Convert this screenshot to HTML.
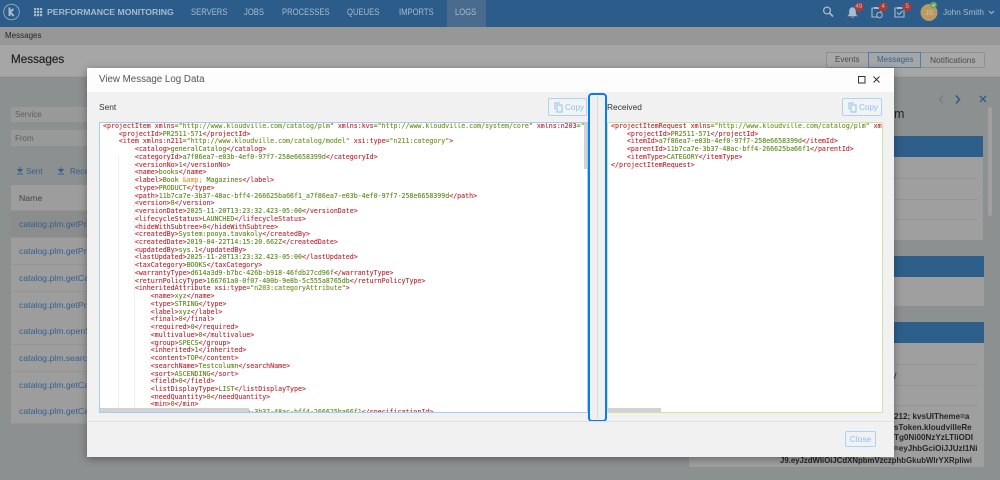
<!DOCTYPE html>
<html><head><meta charset="utf-8"><style>
html,body{margin:0;padding:0;width:1000px;height:480px;overflow:hidden;background:#8d9090;font-family:"Liberation Sans",sans-serif}
#w{position:absolute;left:0;top:0;width:1000px;height:480px;overflow:hidden;filter:blur(.35px)}
.a{position:absolute}
.t{position:absolute;white-space:nowrap}
.n{font-size:9px;color:#a9bbcc;top:6px;line-height:13px;transform:scaleX(.85);transform-origin:0 50%}
.row{position:absolute;left:11px;width:90px;height:27px;background:#9d9d9d;border-bottom:1px solid #959595;box-sizing:border-box}
.row span{position:absolute;left:8px;top:8px;font-size:8.7px;color:#34608f;white-space:nowrap}
.code{position:absolute;font-family:"DejaVu Sans Mono","Liberation Mono",monospace;font-size:6.62px;line-height:7.74px;white-space:pre;color:#5f8a20;-webkit-text-stroke:.12px currentColor}
.code b{font-weight:normal;color:#bd2a33}
.code i{font-style:normal;color:#6f9225}
.code u{text-decoration:none;color:#f0932b}
.copy{position:absolute;top:98px;height:18px;width:39px;box-sizing:border-box;border:1px solid #a9d3f7;border-radius:2px;color:#8cc3f4;font-size:8.2px;line-height:16px;background:#f3f3f3}
.card{position:absolute;background:#9f9f9f;left:689px;width:295px}
.hd{position:absolute;background:#2e5e8a;left:689px;width:295px;height:21px}
.sep{position:absolute;left:700px;width:277px;height:1px;background:#959595}
.k{position:absolute;white-space:nowrap;font-size:8.1px;line-height:12px;color:#262626;font-weight:bold}
</style></head><body><div id="w">

<!-- top bar -->
<div class="a" style="left:0;top:0;width:1000px;height:27px;background:#2c5c8a"></div>
<div class="a" style="left:447px;top:0;width:39px;height:27px;background:#496c8e"></div>
<svg class="a" style="left:0;top:0" width="50" height="27">
<circle cx="11.5" cy="12" r="7.8" fill="none" stroke="#8aa6bf" stroke-width="1"/>
<path d="M9.5 7.5V16M13.5 9l-3.4 3 3.6 4" fill="none" stroke="#a9bbcc" stroke-width="2"/>
<g fill="#a9bbcc"><rect x="34" y="8" width="2.2" height="2.2"/><rect x="37" y="8" width="2.2" height="2.2"/><rect x="40" y="8" width="2.2" height="2.2"/><rect x="34" y="11" width="2.2" height="2.2"/><rect x="37" y="11" width="2.2" height="2.2"/><rect x="40" y="11" width="2.2" height="2.2"/><rect x="34" y="14" width="2.2" height="2.2"/><rect x="37" y="14" width="2.2" height="2.2"/><rect x="40" y="14" width="2.2" height="2.2"/></g>
</svg>
<span class="t" style="left:47px;top:6px;line-height:13px;font-weight:bold;font-size:8.7px;color:#a9bbcc">PERFORMANCE MONITORING</span>
<span class="t n" style="left:191px">SERVERS</span>
<span class="t n" style="left:244px">JOBS</span>
<span class="t n" style="left:282px">PROCESSES</span>
<span class="t n" style="left:347px">QUEUES</span>
<span class="t n" style="left:399px">IMPORTS</span>
<span class="t n" style="left:455px">LOGS</span>
<svg class="a" style="left:815px;top:0" width="185" height="27">
<circle cx="12" cy="10.5" r="3.4" fill="none" stroke="#a9bbcc" stroke-width="1.3"/><path d="M14.5 13l3.5 3.5" stroke="#a9bbcc" stroke-width="1.6"/>
<path d="M33 16c1.5-1.2 1.5-2.5 1.5-5 0-2 1.500-3.500 3-3.500s3 1.500 3 3.500c0 2.500 0 3.800 1.500 5zM36 17.200h3" fill="#a9bbcc" stroke="#a9bbcc" stroke-width=".6"/>
<circle cx="44" cy="7" r="4.500" fill="#a83a3a"/>
<path d="M57 8h9v9h-9z" fill="none" stroke="#a9bbcc" stroke-width="1.100"/><path d="M59 7h5v2h-5z" fill="#a9bbcc"/><circle cx="64.500" cy="15" r="2.800" fill="#2c5c8a" stroke="#a9bbcc"/>
<circle cx="68" cy="7" r="4.500" fill="#a83a3a"/>
<path d="M80 8h9v9h-9z" fill="none" stroke="#a9bbcc" stroke-width="1.100"/><path d="M82 7h5v2h-5z" fill="#a9bbcc"/><path d="M82 12.500l2 2 3.500-3.500" fill="none" stroke="#a9bbcc" stroke-width="1.100"/>
<circle cx="92" cy="7" r="4.500" fill="#a83a3a"/>
<circle cx="114" cy="12.500" r="8.500" fill="#b89a62"/>
<circle cx="118.500" cy="5" r="3.300" fill="#6fa35a"/><path d="M117 5l1.200 1.200 2-2.200" stroke="#dfe8d8" stroke-width=".8" fill="none"/>
<path d="M174 11l2.500 2.500 2.500-2.500" fill="none" stroke="#a9bbcc" stroke-width="1"/>
</svg>
<span class="t" style="left:855.500px;top:4px;font-size:6px;color:#d9b7b7">49</span>
<span class="t" style="left:881.500px;top:4px;font-size:6px;color:#d9b7b7">4</span>
<span class="t" style="left:905.500px;top:4px;font-size:6px;color:#d9b7b7">5</span>
<span class="t" style="left:925px;top:8px;font-size:7.500px;color:#d5c39c">JS</span>
<span class="t" style="left:943px;top:6px;font-size:8.200px;line-height:13px;color:#a9bbcc">John Smith</span>

<!-- breadcrumb / header -->
<div class="a" style="left:0;top:27px;width:1000px;height:18px;background:#979797"></div>
<span class="t" style="left:5px;top:30px;font-size:8px;line-height:11px;color:#272727">Messages</span>
<div class="a" style="left:0;top:45px;width:1000px;height:31px;background:#a6a6a6;border-bottom:1px solid #9c9c9c"></div>
<span class="t" style="left:11px;top:51px;font-size:11.700px;line-height:17px;color:#232323;-webkit-text-stroke:.2px #232323">Messages</span>

<!-- tabs -->
<div class="a" style="left:826px;top:52px;width:159px;height:16px;background:#a8a8a8;border:1px solid #8f8f8f;box-sizing:border-box;border-radius:2px"></div>
<div class="a" style="left:868px;top:52px;width:53px;height:16px;background:#a6a6a6;border:1px solid #4f7ea8;box-sizing:border-box"></div>
<span class="t" style="left:835px;top:54px;font-size:8px;line-height:12px;color:#4a4a4a">Events</span>
<span class="t" style="left:877px;top:54px;font-size:8px;line-height:12px;color:#34608f">Messages</span>
<span class="t" style="left:930px;top:54px;font-size:8.400px;line-height:12px;color:#4a4a4a">Notifications</span>

<!-- left -->
<div class="a" style="left:11px;top:107px;width:90px;height:15px;background:#989a9a"></div>
<div class="a" style="left:11px;top:130px;width:90px;height:16px;background:#989a9a"></div>
<span class="t" style="left:15px;top:109px;font-size:8px;line-height:11px;color:#5c5c5c">Service</span>
<span class="t" style="left:15px;top:133px;font-size:8px;line-height:11px;color:#5c5c5c">From</span>
<svg class="a" style="left:16px;top:166px" width="60" height="12"><path d="M4 1v4M1.800 3.500L4 6l2.200-2.500zM1 8h6" stroke="#34608f" fill="#34608f" stroke-width="1"/><path d="M45 1v4M42.800 3.500L45 6l2.200-2.500zM42 8h6" stroke="#34608f" fill="#34608f" stroke-width="1"/></svg>
<span class="t" style="left:26px;top:166px;font-size:8px;line-height:12px;color:#34608f">Sent</span>
<span class="t" style="left:70px;top:166px;font-size:8px;line-height:12px;color:#34608f">Rece</span>
<div class="row" style="top:185px;height:26px"><span style="color:#444;top:8px">Name</span></div>
<div class="row" style="top:211px;background:#8b8c8c"><span>catalog.plm.getPro</span></div>
<div class="row" style="top:238px"><span>catalog.plm.getPro</span></div>
<div class="row" style="top:265px"><span>catalog.plm.getCat</span></div>
<div class="row" style="top:292px"><span>catalog.plm.getPro</span></div>
<div class="row" style="top:318px"><span>catalog.plm.openS</span></div>
<div class="row" style="top:345px"><span>catalog.plm.search</span></div>
<div class="row" style="top:372px"><span>catalog.plm.getCat</span></div>
<div class="row" style="top:398px;height:26px"><span>catalog.plm.getCat</span></div>

<!-- right panel -->
<div class="card" style="top:136px;height:104px;width:294px"></div>
<div class="hd" style="top:136px;width:294px"></div>
<div class="sep" style="top:178px"></div><div class="sep" style="top:199px"></div><div class="sep" style="top:219px"></div>
<div class="card" style="top:256px;height:50px"></div><div class="hd" style="top:256px"></div>
<div class="card" style="top:322px;height:145px"></div><div class="hd" style="top:322px"></div>
<div class="sep" style="top:364px"></div><div class="sep" style="top:385px"></div><div class="sep" style="top:405px"></div>
<span class="t" style="left:894px;top:107px;font-size:12.500px;line-height:15px;color:#222">m</span>
<span class="t" style="left:894px;top:370px;font-size:9px;line-height:12px;color:#222">/</span>
<span class="k" style="left:894px;top:411px">212; kvsUITheme=a</span>
<span class="k" style="left:894px;top:422px">sToken.kloudvilleRe</span>
<span class="k" style="left:894px;top:432px">Tg0Ni00NzYzLTliODI</span>
<span class="k" style="left:894px;top:443px">=eyJhbGciOiJJUzI1Ni</span>
<span class="k" style="left:780px;top:455px;font-size:7.800px">J9.eyJzdWIiOiJCdXNpbmVzczphbGkubWlrYXRpIiwi</span>
<svg class="a" style="left:935px;top:92px" width="60" height="130">
<path d="M8 3.500L4.500 7.500 8 11" fill="none" stroke="#6f7d88" stroke-width="1.300"/>
<path d="M21 3.500l3.500 4-3.500 4" fill="none" stroke="#2c5c8a" stroke-width="1.500"/>
<path d="M45 4l6 6M51 4l-6 6" stroke="#2c5c8a" stroke-width="1.300"/>
<rect x="53" y="15" width="4" height="109" rx="2" fill="#a0a0a0"/>
</svg>

<!-- modal -->
<div class="a" style="left:87px;top:68px;width:807px;height:389px;background:#f1f1f1;box-shadow:0 2px 8px rgba(0,0,0,.35)"></div>
<div class="a" style="left:87px;top:68px;width:807px;height:24px;background:#fdfdfd"></div>
<span class="t" style="left:99px;top:73px;font-size:9.750px;line-height:14px;color:#555">View Message Log Data</span>
<svg class="a" style="left:855px;top:72px" width="30" height="15">
<rect x="3.500" y="4.500" width="6.500" height="6.500" fill="none" stroke="#333" stroke-width="1"/>
<path d="M18.500 4.500l6 6M24.500 4.500l-6 6" stroke="#333" stroke-width="1"/>
</svg>
<span class="t" style="left:99px;top:101px;font-size:8.400px;line-height:12px;color:#333">Sent</span>
<span class="t" style="left:607px;top:101px;font-size:8.400px;line-height:12px;color:#333">Received</span>

<div class="copy" style="left:548px"><svg class="a" style="left:5px;top:3px" width="10" height="11"><path d="M1 7.500V1h5M3 3h5v7H3z" fill="none" stroke="#8cc3f4" stroke-width="1"/></svg><span class="t" style="left:16px;top:1px">Copy</span></div>
<div class="copy" style="left:842px;width:40px"><svg class="a" style="left:5px;top:3px" width="10" height="11"><path d="M1 7.500V1h5M3 3h5v7H3z" fill="none" stroke="#8cc3f4" stroke-width="1"/></svg><span class="t" style="left:16px;top:1px">Copy</span></div>

<!-- left editor -->
<div class="a" style="left:99px;top:122px;width:489px;height:291px;background:#fff;border:1px solid #a4cdf2;box-sizing:border-box;overflow:hidden">
<div class="a" style="left:18px;top:33px;width:1px;height:260px;background:#efefef"></div>
<div class="a" style="left:34px;top:33px;width:1px;height:260px;background:#efefef"></div>
<div class="a" style="left:50px;top:156px;width:1px;height:130px;background:#efefef"></div>
<div class="code" style="left:3px;top:0px"><b>&lt;projectItem xmlns</b>=<i>"http://www.kloudville.com/catalog/plm"</i> <b>xmlns:kvs</b>=<i>"http://www.kloudville.com/system/core"</i> <b>xmlns:n203</b>=<i>"</i>
    <b>&lt;projectId&gt;</b>PR2511-571<b>&lt;/projectId&gt;</b>
    <b>&lt;item xmlns:n211</b>=<i>"http://www.kloudville.com/catalog/model"</i> <b>xsi:type</b>=<i>"n211:category"</i><b>&gt;</b>
        <b>&lt;catalog&gt;</b>generalCatalog<b>&lt;/catalog&gt;</b>
        <b>&lt;categoryId&gt;</b>a7f86ea7-e03b-4ef0-97f7-258e6658399d<b>&lt;/categoryId&gt;</b>
        <b>&lt;versionNo&gt;</b>1<b>&lt;/versionNo&gt;</b>
        <b>&lt;name&gt;</b>books<b>&lt;/name&gt;</b>
        <b>&lt;label&gt;</b>Book <u>&amp;amp;</u> Magazines<b>&lt;/label&gt;</b>
        <b>&lt;type&gt;</b>PRODUCT<b>&lt;/type&gt;</b>
        <b>&lt;path&gt;</b>11b7ca7e-3b37-48ac-bff4-266625ba66f1_a7f86ea7-e03b-4ef0-97f7-258e6658399d<b>&lt;/path&gt;</b>
        <b>&lt;version&gt;</b>8<b>&lt;/version&gt;</b>
        <b>&lt;versionDate&gt;</b>2025-11-20T13:23:32.423-05:00<b>&lt;/versionDate&gt;</b>
        <b>&lt;lifecycleStatus&gt;</b>LAUNCHED<b>&lt;/lifecycleStatus&gt;</b>
        <b>&lt;hideWithSubtree&gt;</b>0<b>&lt;/hideWithSubtree&gt;</b>
        <b>&lt;createdBy&gt;</b>System:pooya.tavakoly<b>&lt;/createdBy&gt;</b>
        <b>&lt;createdDate&gt;</b>2019-04-22T14:15:20.662Z<b>&lt;/createdDate&gt;</b>
        <b>&lt;updatedBy&gt;</b>sys.1<b>&lt;/updatedBy&gt;</b>
        <b>&lt;lastUpdated&gt;</b>2025-11-20T13:23:32.423-05:00<b>&lt;/lastUpdated&gt;</b>
        <b>&lt;taxCategory&gt;</b>BOOKS<b>&lt;/taxCategory&gt;</b>
        <b>&lt;warrantyType&gt;</b>d614a3d9-b7bc-426b-b918-46fdb27cd96f<b>&lt;/warrantyType&gt;</b>
        <b>&lt;returnPolicyType&gt;</b>166761a0-0f07-400b-9e8b-5c555a8765db<b>&lt;/returnPolicyType&gt;</b>
        <b>&lt;inheritedAttribute xsi:type</b>=<i>"n203:categoryAttribute"</i><b>&gt;</b>
            <b>&lt;name&gt;</b>xyz<b>&lt;/name&gt;</b>
            <b>&lt;type&gt;</b>STRING<b>&lt;/type&gt;</b>
            <b>&lt;label&gt;</b>xyz<b>&lt;/label&gt;</b>
            <b>&lt;final&gt;</b>0<b>&lt;/final&gt;</b>
            <b>&lt;required&gt;</b>0<b>&lt;/required&gt;</b>
            <b>&lt;multivalue&gt;</b>0<b>&lt;/multivalue&gt;</b>
            <b>&lt;group&gt;</b>SPECS<b>&lt;/group&gt;</b>
            <b>&lt;inherited&gt;</b>1<b>&lt;/inherited&gt;</b>
            <b>&lt;content&gt;</b>TOP<b>&lt;/content&gt;</b>
            <b>&lt;searchName&gt;</b>Testcolumn<b>&lt;/searchName&gt;</b>
            <b>&lt;sort&gt;</b>ASCENDING<b>&lt;/sort&gt;</b>
            <b>&lt;field&gt;</b>0<b>&lt;/field&gt;</b>
            <b>&lt;listDisplayType&gt;</b>LIST<b>&lt;/listDisplayType&gt;</b>
            <b>&lt;needQuantity&gt;</b>0<b>&lt;/needQuantity&gt;</b>
            <b>&lt;min&gt;</b>0<b>&lt;/min&gt;</b>
            <b>&lt;specificationId&gt;</b>11b7ca7e-3b37-48ac-bff4-266625ba66f1<b>&lt;/specificationId&gt;</b></div>
<div class="a" style="left:0;top:285px;width:149px;height:5px;background:#d2d2d2"></div>
<div class="a" style="left:484px;top:0;width:4px;height:46px;background:#d2d2d2"></div>
</div>

<!-- right editor -->
<div class="a" style="left:607px;top:122px;width:276px;height:291px;background:#fff;border:1px solid #c9e6a8;box-sizing:border-box;overflow:hidden">
<div class="a" style="left:0;top:285px;width:53px;height:5px;background:#d2d2d2"></div>
<div class="code" style="left:3px;top:0px"><b>&lt;projectItemRequest xmlns</b>=<i>"http://www.kloudville.com/catalog/plm"</i> <b>xm</b>
    <b>&lt;projectId&gt;</b>PR2511-571<b>&lt;/projectId&gt;</b>
    <b>&lt;itemId&gt;</b>a7f86ea7-e03b-4ef0-97f7-258e6658399d<b>&lt;/itemId&gt;</b>
    <b>&lt;parentId&gt;</b>11b7ca7e-3b37-48ac-bff4-266625ba66f1<b>&lt;/parentId&gt;</b>
    <b>&lt;itemType&gt;</b>CATEGORY<b>&lt;/itemType&gt;</b>
<b>&lt;/projectItemRequest&gt;</b></div>
</div>

<!-- splitter -->
<div class="a" style="left:587.500px;top:93px;width:19.500px;height:329px;background:#f0f0f0;border:2.500px solid #0a7bf2;box-sizing:border-box;border-radius:4px"></div>
<div class="a" style="left:597px;top:96px;width:1px;height:323px;background:#dcdcdc"></div>

<!-- footer -->
<div class="a" style="left:87px;top:421px;width:807px;height:1px;background:#e0e0e0"></div>
<div class="a" style="left:845px;top:431px;width:31px;height:16px;border:1px solid #a9d3f7;box-sizing:border-box;border-radius:2px;color:#8cc3f4;font-size:8.500px;line-height:14px;text-align:center">Close</div>
</div></body></html>
